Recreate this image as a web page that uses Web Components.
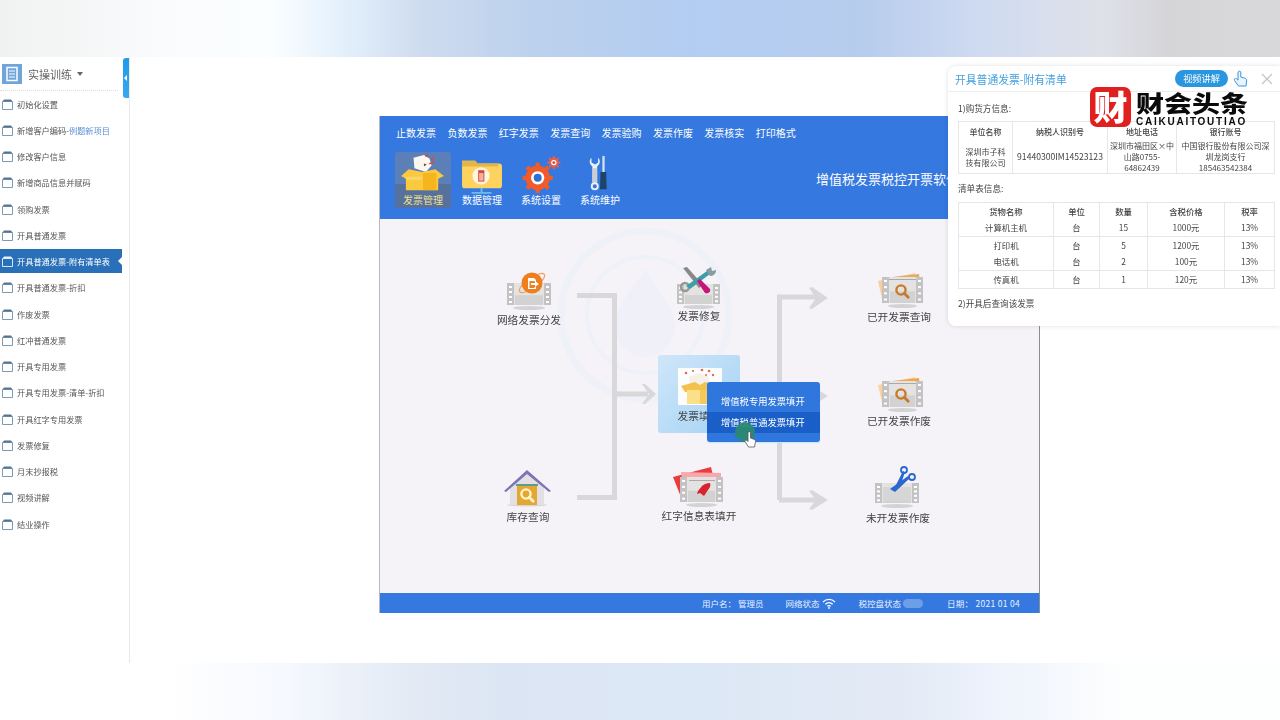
<!DOCTYPE html>
<html lang="zh">
<head>
<meta charset="utf-8">
<title>实操训练</title>
<style>
	html, body { margin: 0; padding: 0; background: #fff; }
	body { width: 1280px; height: 720px; overflow: hidden; font-family: "Noto Sans CJK SC", "Liberation Sans", sans-serif; }
</style>
</head>
<body>
<train-page>
	<train-sidebar slot="side">
		<side-item>初始化设置</side-item>
		<side-item><span>新增客户编码-<span style="color:#5b8fd6">例题新项目</span></span></side-item>
		<side-item>修改客户信息</side-item>
		<side-item>新增商品信息并赋码</side-item>
		<side-item>领购发票</side-item>
		<side-item>开具普通发票</side-item>
		<side-item active>开具普通发票-附有清单表</side-item>
		<side-item>开具普通发票-折扣</side-item>
		<side-item>作废发票</side-item>
		<side-item>红冲普通发票</side-item>
		<side-item>开具专用发票</side-item>
		<side-item>开具专用发票-清单-折扣</side-item>
		<side-item>开具红字专用发票</side-item>
		<side-item>发票修复</side-item>
		<side-item>月末抄报税</side-item>
		<side-item>视频讲解</side-item>
		<side-item>结业操作</side-item>
	</train-sidebar>
	<invoice-app slot="main"></invoice-app>
	<task-panel slot="over"></task-panel>
	<brand-mark slot="over"></brand-mark>
</train-page>
<script>
const BLUE = "#3478e0";

function film(x,y,w,h){
	const dots = [];
	for (let i=0;i<4;i++){
		const dy = y+3+i*(h-5)/3.4;
		dots.push(`<rect x="${x+2}" y="${dy}" width="3" height="2" fill="#fff"/><rect x="${x+w-5}" y="${dy}" width="3" height="2" fill="#fff"/>`);
	}
	return `
		<ellipse cx="${x+w/2}" cy="${y+h+3}" rx="${w/2-6}" ry="2" fill="#c4c4c6" opacity=".7"/>
		<rect x="${x}" y="${y}" width="${w}" height="${h}" fill="#e4e3e2"/>
		<rect x="${x}" y="${y}" width="7" height="${h}" fill="#c3c3c3"/>
		<rect x="${x+w-7}" y="${y}" width="7" height="${h}" fill="#c3c3c3"/>
		<rect x="${x+8}" y="${y+h*0.55}" width="${w-16}" height="${h*0.45}" fill="#d2d2d2"/>
		${dots.join("")}`;
}

function glass(cx,cy,color){
	return `<circle cx="${cx}" cy="${cy}" r="4.6" fill="none" stroke="${color}" stroke-width="2.4"/>
		<path d="M${cx+3.2} ${cy+3.2}l4 4" stroke="${color}" stroke-width="2.8" stroke-linecap="round"/>`;
}

function query(back1,back2,color){
	return `
		<path d="M5 11L42 3l5 24-37 6z" fill="${back1}"/>
		<path d="M10 8l36-4 3 26-35 3z" fill="${back2}"/>
		${film(9,7,41,26)}
		<rect x="16" y="9" width="27" height="1" fill="#aaa"/>
		${glass(28,20,color)}`;
}

const FLOW_ICONS = {
	net: `${film(4,10,44,22)}
		<ellipse cx="29" cy="10" rx="15" ry="5" transform="rotate(-35 29 10)" fill="none" stroke="#f0a060" stroke-width="1.2"/>
		<circle cx="29" cy="10" r="10.5" fill="#f07d1e"/>
		<path d="M25 5h6l2 2v2h-1.500V8h-5v7h5v-1H33v2h-8z" fill="#fff"/>
		<path d="M28 10h4V8l4 3-4 3v-2h-4z" fill="#fff"/>`,
	repair: `${film(4,15,43,20)}
		<path d="M10 -1l4 -1 16 18-4 3z" fill="#8a8886"/>
		<circle cx="12" cy="18" r="4" fill="none" stroke="#9a9896" stroke-width="2.4"/>
		<path d="M13 17L34 2l3 3-20 15z" fill="#3e9fa8"/>
		<path d="M33 1l5-3 1 4 4-1c0 4-3 6-6 6z" fill="#8a9aa0"/>
		<path d="M24 12l3-2 10 10c1 3-2 5-5 4z" fill="#c8157a"/>`,
	box: `<rect x="5" y="-1" width="44" height="37" fill="#fdfdfd"/>
		<path d="M16 8l10-4 9 3 2 8-10 6-10-5z" fill="#f6f1e6"/>
		<g fill="#e06a5c"><circle cx="13" cy="4" r="1.300"/><circle cx="20" cy="2" r="1.100"/><circle cx="29" cy="1" r="1.300"/><circle cx="36" cy="2" r="1.300"/><circle cx="40" cy="6" r="1.200"/><circle cx="33" cy="6" r="1"/></g>
		<path d="M8 17l14-4 5 3 5-3 14 4-5 6H12z" fill="#f3c24c"/>
		<path d="M14 21h13v14H14z" fill="#fbe08a"/>
		<path d="M27 21h13v14H27z" fill="#f6c95a"/>`,
	house: `<ellipse cx="25" cy="35" rx="20" ry="1.500" fill="#d5d5d8"/>
		<path d="M8 16L25 3l17 13v19H8z" fill="#e2e0e2"/>
		<path d="M2 21L25 0l24 21-2 1L25 4 4 22z" fill="#7d74b6"/>
		<rect x="14" y="14" width="22" height="2" fill="#5f9c90"/>
		<rect x="15" y="16" width="20" height="19" fill="#e3a732"/>
		${glass(24,24,"#fff4c8")}`,
	red: `<path d="M0 8L38 -2l6 26-34 9z" fill="#e83d3d"/>
		<path d="M8 3l40 1v27l-36 1z" fill="#f9a7ad"/>
		${film(7,8,43,25)}
		<rect x="16" y="11" width="26" height="1" fill="#aaa"/>
		<path d="M37 14c1 2 0 5-2 7l-4 6-4-3-3 1 1-3 4-5c2-2 5-3 8-3z" fill="#d8232e"/>`,
	query1: query("#f8cf98","#e4ab68","#c87a2a"),
	query2: query("#fbd39c","#f0a650","#c87a2a"),
	cut: `${film(3,12,44,20)}
		<rect x="11" y="16" width="28" height="14" fill="#d6d6d6"/>
		<path d="M18 18l18-13 2 2-15 14z" fill="#2a68d0"/>
		<path d="M24 14l7-14 2 1-4 12z" fill="#2a68d0"/>
		<circle cx="32" cy="-1" r="3" fill="none" stroke="#2a68d0" stroke-width="1.800"/>
		<circle cx="40" cy="6" r="3" fill="none" stroke="#2a68d0" stroke-width="1.800"/>`
};

const TOOL_ICONS = {
	box: `<path d="M13 3l11 -3 6 4 2 7-6 7-12-4z" fill="#fbf7ee"/>
		<path d="M24 9l3 1-3 2z" fill="#555"/>
		<g fill="#d8483c"><path d="M25 1l3-2 1 2-3 1z"/><path d="M31 4l3-2 1 2-3 1z"/><path d="M29 9l5-3 1 2-5 2z"/></g>
		<path d="M0 22l8-7 14 3 14-3 9 7-6 3v12H5V25z" fill="#fbc93e"/>
		<path d="M23 19h14v18H23z" fill="#f6b41f"/>
		<path d="M5 23h17v3H5z" fill="#f9d76a"/>`,
	folder: `<path d="M2 6h14l2 3h23a3 3 0 0 1 3 3v20a3 3 0 0 1-3 3H5a3 3 0 0 1-3-3z" fill="#fdd25e"/>
		<path d="M2 6h14l2 3h22v3H2z" fill="#e4b448"/>
		<circle cx="22" cy="22" r="9" fill="#fff6e0"/>
		<rect x="19" y="16" width="6.500" height="12" fill="#d8483c"/>
		<rect x="20" y="19" width="4.500" height="8" fill="#f2b4a0"/>
		<rect x="21.500" y="35" width="2" height="4" fill="#6cc0f0"/>
		<rect x="12" y="39" width="21" height="1.800" fill="#6cc0f0"/>`,
	gear: `<g transform="translate(1.500 0)">
		<g fill="#ef5b2a"><circle cx="18" cy="24" r="13"/>
		<g stroke="#ef5b2a" stroke-width="4.500"><path d="M18 8v32"/><path d="M2 24h32"/><path d="M6.700 12.700l22.600 22.600"/><path d="M29.300 12.700L6.700 35.300"/></g></g>
		<circle cx="18" cy="24" r="7" fill="#fff"/><circle cx="18" cy="24" r="4.200" fill="#2f6fd0"/>
		<g fill="#e8604a"><circle cx="35" cy="8" r="5"/><g stroke="#e8604a" stroke-width="2"><path d="M35 1v14"/><path d="M28 8h14"/><path d="M30 3l10 10"/><path d="M40 3L30 13"/></g></g>
		<circle cx="35" cy="8" r="2.800" fill="#fff"/><circle cx="35" cy="8" r="1.500" fill="#d84040"/></g>`,
	tools: `<g transform="translate(8 0)">
		<path d="M6 3c-3 3-2 7 1 9v17h5V12c3-2 4-6 1-9v5l-3 2-4-2z" fill="#eef1f4"/>
		<rect x="7" y="14" width="5" height="15" fill="#c9ced4"/>
		<circle cx="9.500" cy="33" r="3.200" fill="none" stroke="#eef1f4" stroke-width="2"/>
		<rect x="17.500" y="1" width="2.400" height="17" fill="#d5e0ea"/>
		<path d="M15.500 18h6l.5 18h-7z" fill="#1f4468"/></g>`
};

class TrainPage extends HTMLElement {
	constructor(){
		super();
		this.attachShadow({mode:"open"});
		this.shadowRoot.innerHTML = `
			<style>
				:host {
					display: flex;
					flex-direction: column;
					position: relative;
					width: 1280px;
					height: 720px;
					overflow: hidden;
					background: #fff;
				}
				#top {
					flex: 0 0 57px;
					background: linear-gradient(90deg, #f0f2f2 0, #fafcfd 180px, #fbfeff 270px, #e4f1fc 340px, #cfdcf0 420px, #bcd1ec 530px, #b3cdf2 690px, #b6cced 860px, #cfdbf1 980px, #dfe1e9 1100px, #d5d5d8 1170px, #d9d9dc 1280px);
				}
				#middle {
					flex: 1;
					display: flex;
					min-height: 0;
				}
				#stage {
					flex: 1;
					padding: 59px 0 0 250px;
				}
				#bottom {
					flex: 0 0 57px;
					background: linear-gradient(90deg, #fff 0, #fff 170px, #f5f8fe 290px, #e4ebf5 400px, #dbe5f3 510px, #dde8f6 700px, #e3eaf5 900px, #eef3fc 1000px, #fdfefe 1120px);
				}
			</style>
			<div id="top"></div>
			<div id="middle">
				<slot name="side"></slot>
				<div id="stage"><slot name="main"></slot></div>
			</div>
			<div id="bottom"></div>
			<slot name="over"></slot>
		`;
	}
}
window.customElements.define("train-page",TrainPage);

class TrainSidebar extends HTMLElement {
	constructor(){
		super();
		this.attachShadow({mode:"open"});
		this.shadowRoot.innerHTML = `
			<style>
				:host {
					display: block;
					position: relative;
					flex: 0 0 129px;
					width: 129px;
					border-right: 1px solid #e8e8ee;
					color: #555;
					filter: blur(.35px);
				}
				#head {
					display: flex;
					align-items: center;
					box-sizing: border-box;
					height: 33.500px;
					padding: 8px 0 6px 2px;
					width: 118px;
					border-bottom: 1px dotted #ddd;
					font-size: 11px;
					color: #666;
				}
				#doc {
					width: 20px;
					height: 20px;
					margin-right: 6px;
				}
				#caret {
					margin-left: 5px;
					border: 3px solid transparent;
					border-top: 4px solid #666;
					border-bottom: 0;
				}
				#handle {
					position: absolute;
					left: 123px;
					top: 1px;
					width: 6px;
					height: 40px;
					border-radius: 3px 0 0 3px;
					background: linear-gradient(180deg, #1f9be6, #3aa7ee);
				}
				#handle::after {
					content: "";
					position: absolute;
					left: 1px;
					top: 17px;
					border: 3px solid transparent;
					border-right: 3px solid #fff;
					border-left: 0;
				}
			</style>
			<div id="head">
				<svg id="doc" viewBox="0 0 20 20">
					<rect width="20" height="20" fill="#6fa5dc"/>
					<rect x="5" y="3.500" width="10" height="13" fill="none" stroke="#fff" stroke-width="1.500"/>
					<path d="M7 7h6M7 10h6M7 13h6" stroke="#fff" stroke-width="1"/>
				</svg>
				实操训练<span id="caret"></span>
			</div>
			<div id="handle"></div>
			<slot></slot>
		`;
	}
}
window.customElements.define("train-sidebar",TrainSidebar);

class SideItem extends HTMLElement {
	constructor(){
		super();
		this.attachShadow({mode:"open"});
		this.shadowRoot.innerHTML = `
			<style>
				:host {
					display: flex;
					align-items: center;
					height: 26.250px;
					font-size: 8.200px;
					color: #555;
				}
				#row {
					display: flex;
					align-items: center;
					position: relative;
					width: 122px;
					height: 24px;
					padding-left: 2px;
					box-sizing: border-box;
					white-space: nowrap;
				}
				svg {
					flex: none;
					width: 11px;
					height: 12px;
					margin-right: 4px;
				}
				:host([active]) #row {
					background: #2a70b8;
					color: #fff;
				}
				:host([active]) #row::after {
					content: "";
					position: absolute;
					right: 0;
					top: 8px;
					border: 4px solid transparent;
					border-right: 4px solid #fff;
					border-left: 0;
				}
			</style>
			<div id="row">
				<svg viewBox="0 0 11 12">
					<path d="M.5 3.500h10V11.500H.5z" fill="none" stroke="#7d9ab2"/>
					<path d="M2 1.500h7l1.500 2H.5z" fill="#56748f"/>
				</svg>
				<slot></slot>
			</div>
		`;
		if (this.hasAttribute("active")){
			this.shadowRoot.querySelector("path").setAttribute("stroke","#d5e6f6");
			this.shadowRoot.querySelectorAll("path")[1].setAttribute("fill","#e8f2fb");
		}
	}
}
window.customElements.define("side-item",SideItem);

class InvoiceApp extends HTMLElement {
	constructor(){
		super();
		this.attachShadow({mode:"open"});
		const menu = ["止数发票","负数发票","红字发票","发票查询","发票验购","发票作废","发票核实","打印格式"];
		const tools = [["box","发票管理"],["folder","数据管理"],["gear","系统设置"],["tools","系统维护"]];
		this.shadowRoot.innerHTML = `
			<style>
				:host {
					display: flex;
					flex-direction: column;
					box-sizing: border-box;
					width: 659px;
					height: 497px;
					box-shadow: -1px 0 0 #b9b9bd, 1px 0 0 #8b8b90;
					background: #f5f3f7;
					filter: blur(.35px);
				}
				#head {
					flex: 0 0 103px;
					box-sizing: border-box;
					background: ${BLUE};
					color: #fff;
					padding: 10px 0 0 15px;
					position: relative;
				}
				#menu {
					display: flex;
					gap: 11.400px;
					padding-left: 1px;
					font-size: 10px;
					line-height: 14px;
				}
				#tools {
					display: flex;
					gap: 3px;
					margin-top: 12px;
				}
				#title {
					position: absolute;
					left: 436px;
					top: 53px;
					font-size: 13px;
					line-height: 20px;
					white-space: nowrap;
				}
				#canvas {
					flex: 1;
					position: relative;
					overflow: hidden;
				}
				#lines {
					position: absolute;
					left: 0;
					top: 0;
				}
				#foot {
					flex: 0 0 20px;
					display: flex;
					align-items: center;
					background: ${BLUE};
					color: #e8f1ff;
					font-size: 8.500px;
					padding-left: 322px;
				}
				#foot span {
					white-space: nowrap;
				}
				#wifi {
					width: 14px;
					height: 11px;
					margin-left: 3px;
				}
				#toggle {
					display: inline-block;
					width: 20px;
					height: 9px;
					margin-left: 2px;
					border-radius: 5px;
					background: #6d9fe6;
				}
				#popup {
					position: absolute;
					left: 327px;
					top: 163px;
					width: 113px;
					height: 60px;
					box-sizing: border-box;
					padding-top: 9px;
					border-radius: 3px;
					background: #2f76dd;
					box-shadow: 0 1px 1px #bfe8ff;
					color: #fff;
					font-size: 9.300px;
				}
				.pop-row {
					height: 21px;
					line-height: 21px;
					padding-left: 14px;
					white-space: nowrap;
				}
				.pop-row + .pop-row {
					background: #1a5fc8;
				}
				#dot {
					position: absolute;
					left: 355px;
					top: 203px;
					width: 20px;
					height: 20px;
					border-radius: 50%;
					background: #2b8a6e;
					opacity: .92;
				}
				#hand {
					position: absolute;
					left: 364px;
					top: 212px;
					width: 12px;
					height: 17px;
				}
			</style>
			<div id="head">
				<div id="menu">${menu.map(m=>`<span>${m}</span>`).join("")}</div>
				<div id="tools">${tools.map((t,i)=>`<tool-button icon="${t[0]}" label="${t[1]}" ${i==0?"active":""}></tool-button>`).join("")}</div>
				<div id="title">增值税发票税控开票软件</div>
			</div>
			<div id="canvas">
				<svg id="lines" width="659" height="375" viewBox="0 0 659 375">
					<g fill="none" stroke="#eef1f8" stroke-width="7">
						<circle cx="265" cy="96" r="84"/>
						<circle cx="265" cy="96" r="58" stroke-width="4"/>
					</g>
					<path d="M265 50c14 22 30 38 30 58a30 30 0 0 1-60 0c0-20 16-36 30-58z" fill="#f0f1f8"/>
					<g fill="none" stroke="#d8d8da" stroke-width="5">
						<path d="M197 76.500H234.500V278.500H197"/>
						<path d="M234 175H268"/>
						<path d="M399.500 281V78H440"/>
						<path d="M399 177H440"/>
						<path d="M399 281H440"/>
					</g>
					<g fill="#d8d8da">
						<path d="M265 165l11 10-11 10-3 0 7-10-7-10z"/>
						<path d="M432 68l16 11-16 11-3-1 7-10-7-10z"/>
						<path d="M432 167l16 10-16 10-3-1 7-9-7-9z"/>
						<path d="M432 271l16 10-16 10-3-1 7-9-7-9z"/>
					</g>
				</svg>
				<flow-node x="149" y="101" icon="net" label="网络发票分发"></flow-node>
				<flow-node x="319" y="97" icon="repair" label="发票修复"></flow-node>
				<flow-node x="319" y="197" icon="box" label="发票填开" selected></flow-node>
				<flow-node x="148" y="298" icon="house" label="库存查询"></flow-node>
				<flow-node x="319" y="297" icon="red" label="红字信息表填开"></flow-node>
				<flow-node x="519" y="98" icon="query1" label="已开发票查询"></flow-node>
				<flow-node x="519" y="202" icon="query2" label="已开发票作废"></flow-node>
				<flow-node x="518" y="299" icon="cut" label="未开发票作废"></flow-node>
				<div id="popup">
					<div class="pop-row">增值税专用发票填开</div>
					<div class="pop-row">增值税普通发票填开</div>
				</div>
				<div id="dot"></div>
				<svg id="hand" viewBox="0 0 12 17">
					<path d="M4 1.500c1-1 2-1 2.500 0V7l4 1.500c.8.500 1 1 1 2l-1 5.500H4.500L1 10.500c-.5-1 .5-2 2-1l1 1z" fill="#fff" stroke="#555" stroke-width=".8"/>
				</svg>
			</div>
			<div id="foot">
				<span>用户名： 管理员</span>
				<span style="margin-left:22px">网络状态</span>
				<svg id="wifi" viewBox="0 0 14 11">
					<path d="M1 4c3.500-3.500 8.500-3.500 12 0M3.300 6.300c2.200-2 5.200-2 7.400 0M5.300 8.300c1-.9 2.400-.9 3.400 0" fill="none" stroke="#fff" stroke-width="1.200"/>
					<circle cx="7" cy="10" r=".9" fill="#fff"/>
				</svg>
				<span style="margin-left:22px">税控盘状态</span>
				<span id="toggle"></span>
				<span style="margin-left:24px;letter-spacing:.3px">日期： 2021 01 04</span>
			</div>
		`;
	}
}
window.customElements.define("invoice-app",InvoiceApp);

class ToolButton extends HTMLElement {
	constructor(){
		super();
		this.attachShadow({mode:"open"});
		this.shadowRoot.innerHTML = `
			<style>
				:host {
					display: flex;
					flex-direction: column;
					align-items: center;
					box-sizing: border-box;
					width: 56px;
					height: 56px;
					padding-top: 3px;
					border-radius: 3px;
					font-size: 10px;
					color: #fff;
				}
				:host([active]) {
					background: linear-gradient(180deg, #5c7fb8 0, #5c7fb8 58%, #55719c 58%, #55719c 100%);
					color: #f5e08a;
				}
				svg {
					width: 44px;
					height: 38px;
					overflow: visible;
				}
				span {
					line-height: 14px;
					white-space: nowrap;
				}
			</style>
			<svg viewBox="0 0 46 40">${TOOL_ICONS[this.getAttribute("icon")]}</svg>
			<span>${this.getAttribute("label")}</span>
		`;
	}
}
window.customElements.define("tool-button",ToolButton);

class FlowNode extends HTMLElement {
	constructor(){
		super();
		this.attachShadow({mode:"open"});
		this.shadowRoot.innerHTML = `
			<style>
				:host {
					display: flex;
					flex-direction: column;
					align-items: center;
					position: absolute;
					width: 100px;
					font-size: 10.700px;
					color: #444;
				}
				svg {
					position: relative;
					width: 52px;
					height: 40px;
					overflow: visible;
				}
				span {
					position: relative;
					line-height: 14px;
					white-space: nowrap;
				}
				#tile {
					display: none;
					position: absolute;
					left: 9px;
					top: -14px;
					width: 82px;
					height: 78px;
					border-radius: 3px;
					background: linear-gradient(135deg, #cfe6f9, #a4d3f5);
				}
				:host([selected]) #tile {
					display: block;
				}
			</style>
			<div id="tile"></div>
			<svg viewBox="0 0 52 40">${FLOW_ICONS[this.getAttribute("icon")]}</svg>
			<span>${this.getAttribute("label")}</span>
		`;
		this.style.left = (this.getAttribute("x")-50)+"px";
		this.style.top = (this.getAttribute("y")-47)+"px";
	}
}
window.customElements.define("flow-node",FlowNode);

class TaskPanel extends HTMLElement {
	constructor(){
		super();
		this.attachShadow({mode:"open"});
		this.shadowRoot.innerHTML = `
			<style>
				:host {
					display: block;
					position: absolute;
					left: 948px;
					top: 66px;
					width: 332px;
					height: 260px;
					box-sizing: border-box;
					border-radius: 8px 0 0 8px;
					background: #fff;
					box-shadow: 0 0 5px rgba(0,0,0,.12);
					font-size: 8.600px;
					color: #444;
					filter: blur(.3px);
				}
				#head {
					display: flex;
					align-items: center;
					box-sizing: border-box;
					height: 26px;
					padding: 0 7px;
					border-bottom: 1px solid #eee;
				}
				#title {
					flex: 1;
					font-size: 10.800px;
					color: #45a0e0;
				}
				#video {
					width: 53px;
					height: 17px;
					border-radius: 9px;
					background: #2a96e0;
					color: #fff;
					font-size: 9.200px;
					line-height: 17px;
					text-align: center;
				}
				#hand {
					width: 15px;
					height: 17px;
					margin-left: 5px;
				}
				#close {
					width: 12px;
					height: 12px;
					margin-left: 13px;
				}
				#body {
					padding: 10px 6px 0 10px;
				}
				p {
					margin: 0;
					line-height: 13px;
				}
				table {
					border-collapse: collapse;
					table-layout: fixed;
					width: 316px;
					text-align: center;
				}
				td {
					padding: 0;
					border: 1px solid #e6e6e8;
					line-height: 11px;
				}
				#t1 {
					margin: 6px 0 8px;
					font-size: 8px;
				}
				#t1 .num {
					font-size: 8.600px;
				}
				#t1 tr:first-child td {
					height: 18px;
					border-bottom: 0;
					font-weight: 500;
				}
				#t1 tr:last-child td {
					height: 33px;
					border-top: 0;
				}
				#t2 {
					margin: 7px 0 8px;
					font-size: 8.400px;
				}
				#t2 td {
					height: 16.500px;
					border-top: 0;
					border-bottom: 0;
				}
				#t2 tr:nth-child(1) td, #t2 tr:nth-child(3) td, #t2 tr:nth-child(5) td {
					border-top: 1px solid #e6e6e8;
				}
				#t2 tr:nth-child(1) td {
					font-weight: 500;
				}
				#t2 tr:last-child td {
					border-bottom: 1px solid #e6e6e8;
				}
			</style>
			<div id="head">
				<div id="title">开具普通发票-附有清单</div>
				<div id="video">视频讲解</div>
				<svg id="hand" viewBox="0 0 15 17">
					<path d="M5 2c.8-1.200 2.200-1.200 2.800 0v5l4 1.200c1.400.5 2 1.200 1.800 2.800L13 16H5.500L1.500 10.500c-1-1.500 1-3 2.300-1.500l1.200 1.200z" fill="#eaf4fc" stroke="#3a96dc" stroke-width="1"/>
				</svg>
				<svg id="close" viewBox="0 0 12 12"><path d="M1 1l10 10M11 1L1 11" stroke="#c4c4c6" stroke-width="1.200"/></svg>
			</div>
			<div id="body">
				<p>1)购货方信息:</p>
				<table id="t1">
					<colgroup><col style="width:54px"><col style="width:95px"><col style="width:69px"><col style="width:98px"></colgroup>
					<tr><td>单位名称</td><td>纳税人识别号</td><td>地址电话</td><td>银行账号</td></tr>
					<tr><td>深圳市子科<br>技有限公司</td><td class="num">91440300IM14523123</td><td>深圳市福田区×中<br>山路0755-<br>64862439</td><td>中国银行股份有限公司深<br>圳龙岗支行<br>185463542384</td></tr>
				</table>
				<p>清单表信息:</p>
				<table id="t2">
					<colgroup><col style="width:95px"><col style="width:46px"><col style="width:48px"><col style="width:77px"><col style="width:50px"></colgroup>
					<tr><td>货物名称</td><td>单位</td><td>数量</td><td>含税价格</td><td>税率</td></tr>
					<tr><td>计算机主机</td><td>台</td><td>15</td><td>1000元</td><td>13%</td></tr>
					<tr><td>打印机</td><td>台</td><td>5</td><td>1200元</td><td>13%</td></tr>
					<tr><td>电话机</td><td>台</td><td>2</td><td>100元</td><td>13%</td></tr>
					<tr><td>传真机</td><td>台</td><td>1</td><td>120元</td><td>13%</td></tr>
				</table>
				<p>2)开具后查询该发票</p>
			</div>
		`;
	}
}
window.customElements.define("task-panel",TaskPanel);

class BrandMark extends HTMLElement {
	constructor(){
		super();
		this.attachShadow({mode:"open"});
		this.shadowRoot.innerHTML = `
			<style>
				:host {
					display: flex;
					position: absolute;
					left: 1090px;
					top: 87px;
					gap: 5px;
					font-family: "Noto Sans CJK SC", sans-serif;
					color: #0a0a0a;
				}
				#seal {
					position: relative;
					width: 41px;
					height: 40px;
					border-radius: 7px;
					background: #e0201e;
					color: #fff;
					font-size: 34px;
					font-weight: 900;
					line-height: 38px;
					text-align: center;
				}
				#name {
					height: 23px;
					margin-top: 4px;
					font-size: 28px;
					font-weight: 900;
					line-height: 28px;
					white-space: nowrap;
					transform: scaleY(.8);
					transform-origin: 0 0;
				}
				#latin {
					font-family: "Liberation Sans", sans-serif;
					font-size: 10px;
					font-weight: 700;
					line-height: 11px;
					letter-spacing: 1.750px;
					margin-top: 2px;
					white-space: nowrap;
				}
			</style>
			<div id="seal">财</div>
			<div>
				<div id="name">财会头条</div>
				<div id="latin">CAIKUAITOUTIAO</div>
			</div>
		`;
	}
}
window.customElements.define("brand-mark",BrandMark);
</script>
</body>
</html>
